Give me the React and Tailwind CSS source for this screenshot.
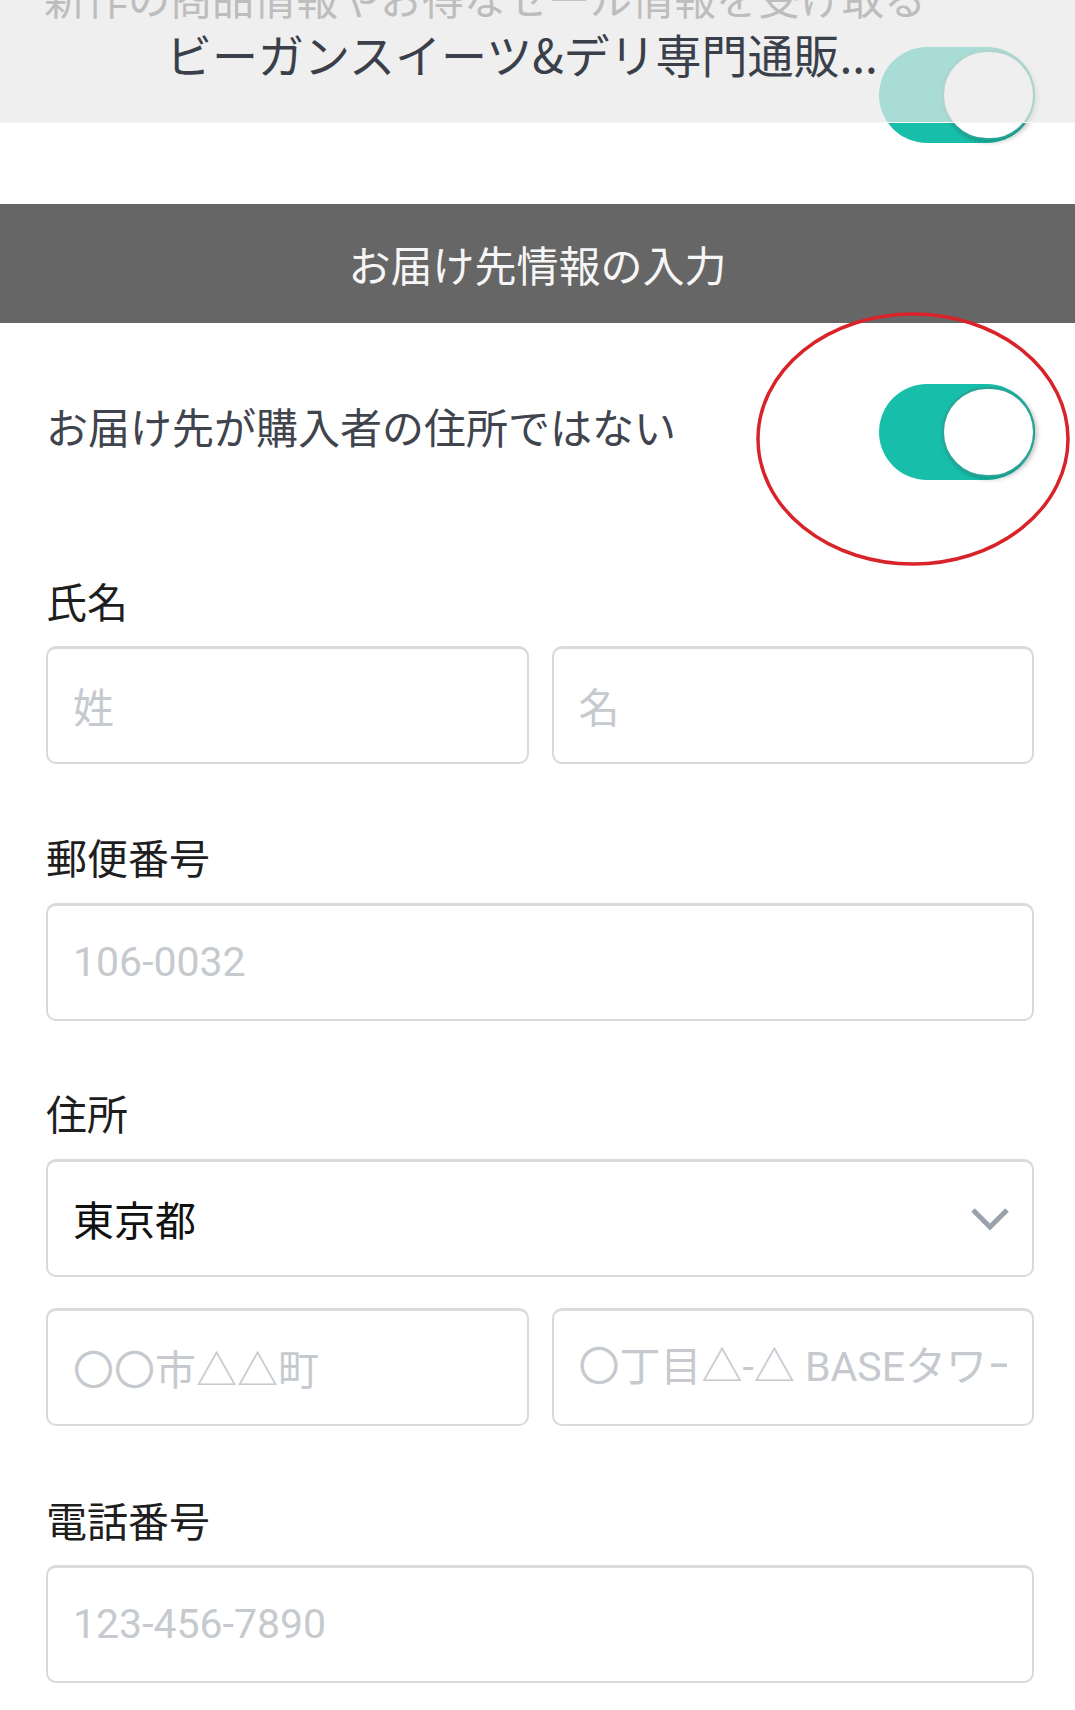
import React from "react";

const FONT = { fontFamily: '"Noto Sans CJK JP", "Noto Sans", sans-serif' };
const NUMFONT = { fontFamily: 'Roboto, "Noto Sans CJK JP", sans-serif' };

function Toggle() {
  return (
    <div className="flex h-[96px] w-[156px] items-center justify-end rounded-full bg-[#17bfaa]">
      <div className="h-[90px] w-[93px] rounded-full border-2 border-[#2aa596] bg-white shadow-[2px_2px_5px_rgba(0,0,0,0.25)]" />
    </div>
  );
}

function Label({ children }) {
  return <div className="h-[60px] text-[41px] leading-[60px] text-[#1e1e1e]">{children}</div>;
}

function Field({ children, className = "" }) {
  return (
    <div
      className={
        "flex h-[118px] items-center rounded-[10px] border-2 border-[#d8dadd] border-t-[3px] bg-white px-[25px] " +
        className
      }
    >
      {children}
    </div>
  );
}

function Placeholder({ children, num }) {
  return (
    <div className="min-w-0 flex-1 overflow-hidden">
      <span className="whitespace-nowrap text-[41px] text-[#c6cace]" style={num ? NUMFONT : undefined}>
        {children}
      </span>
    </div>
  );
}

export default function App() {
  return (
    <div className="relative h-[1710px] w-[1075px] overflow-hidden bg-white" style={FONT}>
      {/* translucent sticky header */}
      <div className="absolute inset-x-0 top-0 z-10 h-[123px] overflow-hidden border-b border-[#f6f6f6] bg-[#e8e8e8]/70">
        <div className="-mt-[24px] whitespace-nowrap pl-[44px] text-[42px] leading-[42px] text-[#bdbdbd]">
          新作の商品情報やお得なセール情報を受け取る
        </div>
        <div className="mt-[12px] whitespace-nowrap pl-[166px] text-[46px] leading-[46px] text-[#3a3f4a]">
          ビーガンスイーツ&amp;デリ専門通販...
        </div>
      </div>

      {/* toggle under header */}
      <div className="flex justify-end pr-[40px] pt-[47px]">
        <Toggle />
      </div>

      {/* section title */}
      <div className="mt-[61px] flex h-[119px] items-center justify-center bg-[#666666] text-[42px] text-[#f6f6f6]">
        お届け先情報の入力
      </div>

      {/* toggle row */}
      <div className="mt-[61px] flex items-center justify-between pl-[46px] pr-[40px]">
        <div className="pb-[14px] text-[42px] text-[#40444d]">お届け先が購入者の住所ではない</div>
        <Toggle />
      </div>

      {/* red annotation ellipse */}
      <svg className="absolute left-[754px] top-[310px] z-20" width="318" height="258" viewBox="0 0 318 258">
        <ellipse cx="159" cy="129" rx="155" ry="125" fill="none" stroke="#d8232a" strokeWidth="3.5" />
      </svg>

      {/* form */}
      <div className="pl-[46px] pr-[41px] pt-[90px]">
        <Label>氏名</Label>
        <div className="mt-[16px] grid grid-cols-2 gap-[23px]">
          <Field>
            <Placeholder>姓</Placeholder>
          </Field>
          <Field>
            <Placeholder>名</Placeholder>
          </Field>
        </div>

        <div className="mt-[62px]">
          <Label>郵便番号</Label>
        </div>
        <div className="mt-[17px]">
          <Field>
            <Placeholder num>106-0032</Placeholder>
          </Field>
        </div>

        <div className="mt-[61px]">
          <Label>住所</Label>
        </div>
        <div className="mt-[17px]">
          <Field className="justify-between !pr-[22px]">
            <span className="text-[41px] text-[#111111]">東京都</span>
            <svg width="40" height="26" viewBox="0 0 40 26">
              <polyline points="3,4 20,21 37,4" fill="none" stroke="#9aa2ab" strokeWidth="5" />
            </svg>
          </Field>
        </div>
        <div className="mt-[31px] grid grid-cols-2 gap-[23px]">
          <Field>
            <Placeholder>〇〇市△△町</Placeholder>
          </Field>
          <Field>
            <Placeholder num>〇丁目△-△ BASEタワー</Placeholder>
          </Field>
        </div>

        <div className="mt-[63px]">
          <Label>電話番号</Label>
        </div>
        <div className="mt-[16px]">
          <Field>
            <Placeholder num>123-456-7890</Placeholder>
          </Field>
        </div>
      </div>
    </div>
  );
}
